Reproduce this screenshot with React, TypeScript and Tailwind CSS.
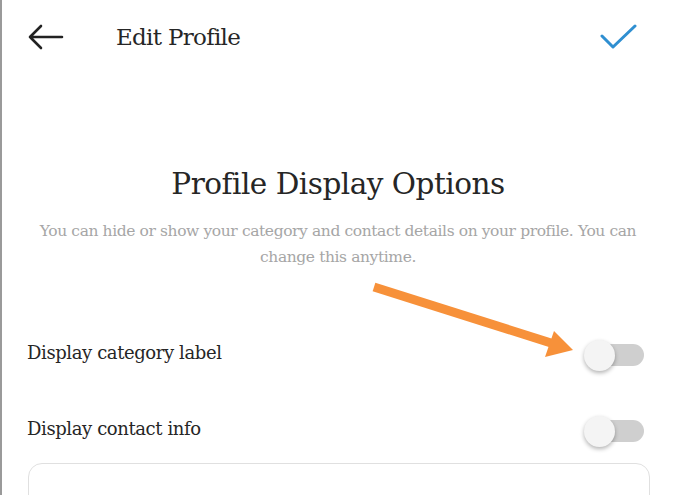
function Toggle() {
  return (
    <div className="relative mt-[6px] h-[32px] w-[60px]">
      <div className="absolute right-0 top-[5px] h-[22px] w-[50px] rounded-full bg-[#cfcfcf]" />
      <div className="absolute left-0 top-[1px] h-[31px] w-[31px] rounded-full bg-[#f4f4f4] shadow-[0_2px_4px_rgba(0,0,0,0.3)]" />
    </div>
  );
}

export default function App() {
  return (
    <div
      className="relative h-[495px] w-[674px] overflow-hidden border-l-2 border-[#9a9a9a] bg-white text-[#262626]"
      style={{ fontFamily: '"DejaVu Serif", serif' }}
    >
      <header className="flex h-[74px] items-center pl-[26px] pr-[36px]">
        <svg width="36" height="26" viewBox="0 0 36 26" fill="none" stroke="#222" strokeWidth="2.6" strokeLinecap="round" strokeLinejoin="round">
          <path d="M34 13H2M13 2L2 13l11 11" />
        </svg>
        <h1 className="ml-[52px] text-[23px] tracking-[-0.7px]">Edit Profile</h1>
        <svg className="ml-auto" width="38" height="26" viewBox="0 0 38 26" fill="none" stroke="#2f8fd1" strokeWidth="3" strokeLinecap="round" strokeLinejoin="round">
          <path d="M2 12l11 11L35 2" />
        </svg>
      </header>

      <section className="mt-[88px] flex flex-col items-center px-[30px] text-center">
        <h2 className="text-[29.5px] font-light tracking-[-0.5px] text-[#262626]">Profile Display Options</h2>
        <p className="mt-[12px] text-[15.5px] leading-[26px] tracking-[-0.4px] text-[#a6a6a6]">
          You can hide or show your category and contact details on your profile. You can change this anytime.
        </p>
      </section>

      <div className="mt-[58px] flex flex-col px-[25px]">
        <div className="flex h-[48px] items-center justify-between pr-[5px]">
          <span className="text-[18px] tracking-[-0.4px]">Display category label</span>
          <Toggle />
        </div>
        <div className="mt-[28px] flex h-[48px] items-center justify-between pr-[5px]">
          <span className="text-[18px] tracking-[-0.4px]">Display contact info</span>
          <Toggle />
        </div>
      </div>

      <div className="absolute left-[26px] right-[24px] top-[463px] h-[60px] rounded-[14px] border border-[#e0e0e0]" />

      <svg className="absolute left-[366px] top-[280px]" width="220" height="80" viewBox="0 0 220 80">
        <path d="M6 7L183 63" stroke="#f7913a" strokeWidth="9" strokeLinecap="butt" />
        <path d="M186 51L177 77L205 70Z" fill="#f7913a" />
      </svg>
    </div>
  );
}
